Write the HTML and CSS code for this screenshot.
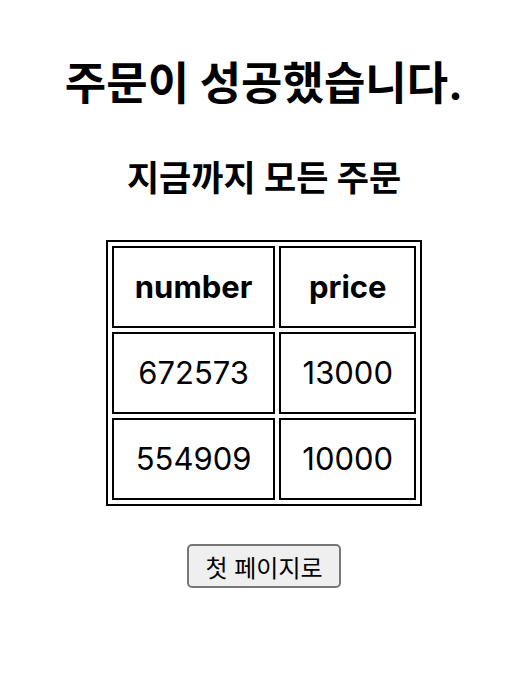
FILE: index.html
```html
<!DOCTYPE html>
<html lang="ko">
<head>
  <meta charset="UTF-8">
  <meta name="viewport" content="width=device-width, initial-scale=1.0">
  <title>주문 완료</title>
  <link rel="stylesheet" href="styles.css">
</head>
<body>

  <!-- Order complete -->
  <div class="page">
    <h1>주문이 성공했습니다.</h1>
    <h2>지금까지 모든 주문</h2>

    <table class="orders">
      <tr>
        <th>number</th>
        <th>price</th>
      </tr>
      <tr>
        <td>672573</td>
        <td>13000</td>
      </tr>
      <tr>
        <td>554909</td>
        <td>10000</td>
      </tr>
    </table>

    <button class="home-btn">첫 페이지로</button>
  </div>

</body>
</html>
```

FILE: styles.css
```css
* {
  margin: 0;
  padding: 0;
  box-sizing: border-box;
}

body {
  font-family: Inter, 'Noto Sans CJK KR', sans-serif;
  color: #000;
  background-color: #fff;
}

.page {
  display: flex;
  flex-direction: column;
  align-items: center;
  padding-top: 56px;
}

h1 {
  font-size: 45px;
  font-weight: bold;
  line-height: 56px;
}

h2 {
  font-size: 35px;
  font-weight: bold;
  line-height: 44px;
  margin-top: 44px;
}

.orders {
  margin-top: 40px;
  border: 2px solid #000;
  border-spacing: 4px;
  font-size: 31px;
}

.orders th,
.orders td {
  border: 2px solid #000;
  padding: 21px 21px;
  line-height: 36px;
  text-align: center;
}

.home-btn {
  margin-top: 38px;
  width: 154px;
  height: 44px;
  font-family: Inter, 'Noto Sans CJK KR', sans-serif;
  font-size: 24px;
  color: #000;
  background-color: #efefef;
  border: 2px solid #767676;
  border-radius: 5px;
}
```
